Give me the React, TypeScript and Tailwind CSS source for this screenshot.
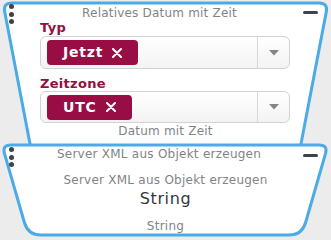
import React from "react";

type Pt = [number, number];

// rounded polygon path, corners cut with quadratic curves
function roundedPath(pts: Pt[], radii: number[]) {
  const n = pts.length;
  let d = "";
  for (let i = 0; i < n; i++) {
    const p = pts[i];
    const prev = pts[(i - 1 + n) % n];
    const next = pts[(i + 1) % n];
    const r = radii[i];
    const toPrev = [prev[0] - p[0], prev[1] - p[1]];
    const toNext = [next[0] - p[0], next[1] - p[1]];
    const lp = Math.hypot(toPrev[0], toPrev[1]);
    const ln = Math.hypot(toNext[0], toNext[1]);
    const a: Pt = [p[0] + (toPrev[0] / lp) * r, p[1] + (toPrev[1] / lp) * r];
    const b: Pt = [p[0] + (toNext[0] / ln) * r, p[1] + (toNext[1] / ln) * r];
    d += (i === 0 ? `M ${a[0]} ${a[1]} ` : `L ${a[0]} ${a[1]} `) + `Q ${p[0]} ${p[1]} ${b[0]} ${b[1]} `;
  }
  return d + "Z";
}

function NodeShape({ pts, radii, w, h }: { pts: Pt[]; radii: number[]; w: number; h: number }) {
  return (
    <svg className="absolute inset-0" width={w} height={h}>
      <path d={roundedPath(pts, radii)} fill="#ffffff" stroke="#4aabe6" strokeWidth={3} strokeLinejoin="round" />
    </svg>
  );
}

function Dots() {
  return (
    <div className="absolute left-[9px] top-[4px] flex flex-col gap-[2.5px]">
      <span className="w-[5px] h-[5px] rounded-full bg-[#3f4347]" />
      <span className="w-[5px] h-[5px] rounded-full bg-[#3f4347]" />
      <span className="w-[5px] h-[5px] rounded-full bg-[#3f4347]" />
    </div>
  );
}

function Minus() {
  return <span className="absolute right-[13px] top-[11px] w-[15px] h-[3px] rounded-full bg-[#3f4347]" />;
}

function Chip({ label }: { label: string }) {
  return (
    <div className="flex items-center gap-[9px] h-[25px] px-[16px] rounded-[4px] bg-[#970d44] text-white text-[14px] font-bold tracking-[0.8px]">
      <span>{label}</span>
      <svg width="10" height="10" viewBox="0 0 10 10">
        <path d="M1 1 L9 9 M9 1 L1 9" stroke="#fff" strokeWidth={2} strokeLinecap="round" />
      </svg>
    </div>
  );
}

function TagSelect({ label, h }: { label: string; h: string }) {
  return (
    <div className={`flex ${h} rounded-[6px] border border-[#d2d2d2] bg-gradient-to-b from-[#ffffff] to-[#f3f3f3]`}>
      <div className="flex-1 flex items-center pl-[6px]">
        <Chip label={label} />
      </div>
      <div className="w-[32px] flex items-center justify-center border-l border-[#d8d8d8]">
        <svg width="10" height="6" viewBox="0 0 10 6">
          <path d="M0 0 L10 0 L5 5.5 Z" fill="#80858a" />
        </svg>
      </div>
    </div>
  );
}

export default function App() {
  const font = { fontFamily: '"DejaVu Sans", "Liberation Sans", sans-serif' };
  return (
    <div className="relative w-[331px] h-[240px] bg-[#ececec] overflow-hidden" style={font}>
      {/* node 1 */}
      <div className="absolute left-0 top-0 w-[331px] h-[180px]">
        <NodeShape
          w={331}
          h={180}
          pts={[[3, 3], [328, 3], [295, 175], [36, 175]]}
          radii={[9, 9, 10, 10]}
        />
        <Dots />
        <Minus />
        <div className="relative flex flex-col">
          <div className="text-center text-[12px] leading-[14px] tracking-[0.2px] pt-[6px] pr-[12px] text-[#808487]">
            Relatives Datum mit Zeit
          </div>
          <div className="pl-[40px] pr-[41px]">
            <div className="text-[13px] leading-[16px] font-semibold tracking-[0.3px] text-[#920f42]">Typ</div>
            <TagSelect label="Jetzt" h="h-[33px]" />
            <div className="text-[13px] leading-[15px] font-semibold tracking-[0.3px] text-[#920f42] mt-[7px]">Zeitzone</div>
            <TagSelect label="UTC" h="h-[32px]" />
          </div>
          <div className="text-center text-[12px] leading-[14px] tracking-[0.2px] pt-[1px] text-[#808487]">Datum mit Zeit</div>
        </div>
      </div>

      {/* node 2 */}
      <div className="absolute left-0 top-[143px] w-[331px] h-[97px]">
        <NodeShape
          w={331}
          h={97}
          pts={[[2, 2], [328, 2], [302, 92], [28, 92]]}
          radii={[9, 9, 13, 13]}
        />
        <Dots />
        <Minus />
        <div className="relative flex flex-col items-center text-[12px] tracking-[0.25px]">
          <div className="leading-[14px] pt-[4px] pr-[13px] text-[#808487]">Server XML aus Objekt erzeugen</div>
          <div className="leading-[14px] pt-[12px] text-[#808487]">Server XML aus Objekt erzeugen</div>
          <div className="text-[16px] leading-[19px] font-medium tracking-[0.6px] text-[#33373b] pt-[2px]">String</div>
          <div className="leading-[14px] pt-[11px] text-[#808487]">String</div>
        </div>
      </div>
    </div>
  );
}
